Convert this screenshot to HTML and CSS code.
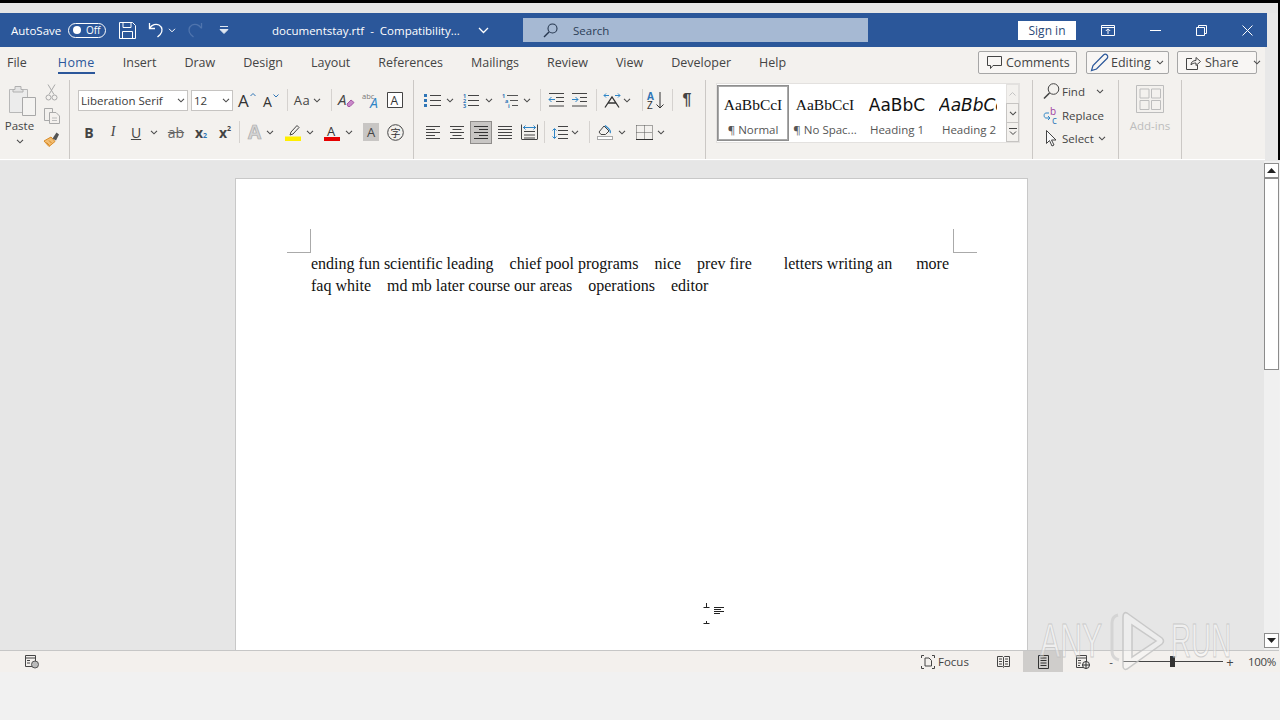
FILE: index.html
```html
<!DOCTYPE html>
<html lang="en">
<head>
<meta charset="utf-8">
<title>documentstay.rtf - Word</title>
<link rel="stylesheet" href="styles.css">
</head>
<body>
<svg class="defs" width="0" height="0" aria-hidden="true">
  <symbol id="chev" viewBox="0 0 8 5"><path d="M1 .8l3 3 3-3" fill="none" stroke="#4a4a4a" stroke-width="1.1"/></symbol>
  <symbol id="al" viewBox="0 0 16 13"><path d="M1 .5h14M1 3.5h9M1 6.5h14M1 9.5h9M1 12.5h14" stroke="#444" fill="none"/></symbol>
  <symbol id="ac" viewBox="0 0 16 13"><path d="M1 .5h14M3.5 3.5h9M1 6.5h14M3.500 9.500h9M1 12.500h14" stroke="#444" fill="none"/></symbol>
  <symbol id="ar" viewBox="0 0 16 13"><path d="M1 .5h14M6 3.500h9M1 6.500h14M6 9.500h9M1 12.500h14" stroke="#333" fill="none"/></symbol>
  <symbol id="aj" viewBox="0 0 16 13"><path d="M1 .5h14M1 3.500h14M1 6.500h14M1 9.500h14M1 12.500h14" stroke="#444" fill="none"/></symbol>
</svg>

<div class="screen">
  <div class="strip"></div>
  <div class="upper">
    <header class="titlebar">
      <span class="autosave">AutoSave</span>
      <span class="toggle"><i class="dot"></i><span class="off">Off</span></span>
      <svg class="ic-save" width="17" height="17" viewBox="0 0 17 17"><path d="M.5.5h13l3 3v13H.5z M4 .5v5h8v-5 M3.500 16.500v-7h10v7" fill="none" stroke="#fff"/></svg>
      <svg class="ic-undo" width="16" height="16" viewBox="0 0 16 16"><path d="M1.500 1v5.500H7M1.800 6C4 2.500 8 1.500 11 3c3.500 2 4 6.500 1.200 9.500L9.500 15" fill="none" stroke="#fff" stroke-width="1.300"/></svg>
      <svg class="ic-uchev" width="8" height="5"><path d="M1 .8l3 3 3-3" fill="none" stroke="#fff"/></svg>
      <svg class="ic-redo" width="16" height="16" viewBox="0 0 16 16"><path d="M14.500 1v5.500M14 6C12 2.500 8 1.500 5 3c-3.500 2-4 6.500-1.200 9.500L6.500 15" fill="none" stroke="#4f74ad" stroke-width="1.300"/></svg>
      <svg class="ic-qat" width="10" height="8" viewBox="0 0 10 8"><path d="M1 .5h8M1 3.500l4 4 4-4z" fill="#dfe7f2" stroke="#dfe7f2"/></svg>
      <span class="docname">documentstay.rtf&nbsp; - &nbsp;Compatibility...</span>
      <svg class="ic-dchev" width="11" height="7" viewBox="0 0 11 7"><path d="M1 1l4.500 4.500L10 1" fill="none" stroke="#fff" stroke-width="1.300"/></svg>
      <div class="search">
        <svg width="15" height="15" viewBox="0 0 15 15"><circle cx="9.500" cy="5.500" r="4.500" fill="none" stroke="#26374f" stroke-width="1.100"/><path d="M6 9l-5 5" stroke="#26374f" stroke-width="1.400"/></svg>
        <span>Search</span>
      </div>
      <div class="signin">Sign in</div>
      <svg class="ic-disp" width="14" height="11" viewBox="0 0 14 11"><path d="M.5.5h13v10H.5zM.5 2.500h13" fill="none" stroke="#fff"/><path d="M7 9V4M4.800 6L7 3.800 9.200 6" fill="none" stroke="#fff"/></svg>
      <svg class="ic-min" width="11" height="1" viewBox="0 0 11 1"><path d="M0 .5h11" stroke="#fff"/></svg>
      <svg class="ic-rest" width="11" height="11" viewBox="0 0 11 11"><path d="M.5 2.500h8v8h-8zM2.500 2.500v-2h8v8h-2" fill="none" stroke="#fff"/></svg>
      <svg class="ic-close" width="11" height="11" viewBox="0 0 11 11"><path d="M.5.5l10 10M10.500.5l-10 10" stroke="#fff"/></svg>
    </header>

    <nav class="tabs">
      <span class="tab tab-file">File</span>
      <span class="tab active">Home</span>
      <span class="tab">Insert</span>
      <span class="tab">Draw</span>
      <span class="tab">Design</span>
      <span class="tab">Layout</span>
      <span class="tab">References</span>
      <span class="tab">Mailings</span>
      <span class="tab">Review</span>
      <span class="tab">View</span>
      <span class="tab">Developer</span>
      <span class="tab">Help</span>
      <div class="actions">
        <span class="action act-comments"><svg width="15" height="14" viewBox="0 0 15 14"><path d="M.5.500h14v9H6L3.500 12.500v-3h-3z" fill="none" stroke="#444"/></svg>Comments</span>
        <span class="action act-editing"><svg width="19" height="19" viewBox="0 0 19 19"><path d="M1.500 17.500l1.500-5L13.500 2c1-1 2.500-1 3.500 0s1 2.500 0 3.500L6.500 16z" fill="none" stroke="#2b579a" stroke-width="1.200"/></svg>Editing<svg class="mini" width="8" height="5"><use href="#chev"/></svg></span>
        <span class="action act-share"><svg width="15" height="14" viewBox="0 0 15 14"><path d="M6 2.500H.5v11h11V9M5 9c0-3 2-4.500 5-4.500V1.500l4.500 4-4.500 4V7C8 7 6 7.500 5 9z" fill="none" stroke="#444"/></svg>Share<svg class="mini m-share" width="8" height="5"><use href="#chev"/></svg></span>
      </div>
    </nav>

    <section class="ribbon">
      <div class="group g-clip">
        <div class="paste">
          <svg width="28" height="31" viewBox="0 0 28 31"><path d="M.5 4.500h18v23H.5z" fill="#ececec" stroke="#b8b8b8"/><path d="M6 4.500V1.500h6v3h2v2.500H4V4.500z" fill="#e4e4e4" stroke="#b0b0b0"/><path d="M13.500 12.500h13v18h-13z" fill="#f4f3f1" stroke="#a8a8a8"/></svg>
          <span class="paste-label">Paste</span>
          <svg class="paste-chev" width="8" height="5"><use href="#chev"/></svg>
        </div>
        <div class="clip-small">
          <svg width="11" height="17" viewBox="0 0 11 17"><path d="M2 .5l6 10M9 .5l-6 10" stroke="#a9a9a9" fill="none"/><circle cx="2.500" cy="13.500" r="2.500" fill="none" stroke="#a9a9a9"/><circle cx="8.500" cy="13.500" r="2.500" fill="none" stroke="#a9a9a9"/></svg>
          <svg width="16" height="16" viewBox="0 0 16 16"><path d="M.5.500h8l0 12H.5z" fill="none" stroke="#a9a9a9"/><path d="M5.500 4.500h6.500l3.500 3.500v7.500h-10z" fill="#f4f1ee" stroke="#a9a9a9"/><path d="M8 10h5M8 12.500h5" stroke="#bbb"/></svg>
          <svg width="17" height="16" viewBox="0 0 17 16"><path d="M8 6L1 10l5 5.500 6-5z" fill="#f2bd72" stroke="#d98a24"/><path d="M3.500 11.500l3 3M6 9.500l2.500 2.500" stroke="#d98a24"/><path d="M9.500 7.500l4-6 2.500 2-3 6z" fill="#555"/></svg>
        </div>
      </div>

      <div class="group g-font">
        <div class="row">
          <span class="combo c-font">Liberation Serif<svg width="8" height="5"><use href="#chev"/></svg></span>
          <i class="w3"></i>
          <span class="combo c-size">12<svg width="8" height="5"><use href="#chev"/></svg></span>
          <i class="w2"></i>
          <span class="t w24"><svg width="18" height="17" viewBox="0 0 18 17"><text x="0" y="15" class="sv" font-size="17" fill="#333">A</text><path d="M12.500 4L15 1.500 17.500 4" fill="none" stroke="#2e75b6"/></svg></span>
          <span class="t w24"><svg width="16" height="15" viewBox="0 0 16 15"><text x="0" y="14" class="sv" font-size="14" fill="#333">A</text><path d="M10.500 1.500L13 4l2.500-2.500" fill="none" stroke="#2e75b6"/></svg></span>
          <i class="w4"></i><i class="sep"></i><i class="w4"></i>
          <span class="t w20 glyph">Aa</span>
          <span class="t w10"><svg width="8" height="5"><use href="#chev"/></svg></span>
          <i class="w9"></i><i class="sep"></i><i class="w2"></i>
          <span class="t w24"><svg width="17" height="17" viewBox="0 0 17 17"><text x="0" y="13" class="sv it" font-size="15" fill="#444">A</text><path d="M9 12l4-4 3 2.500-4 4h-2z" fill="#c889c8" stroke="#a556a5"/></svg></span>
          <span class="t w25"><svg width="18" height="17" viewBox="0 0 18 17"><text x="0" y="7" class="sv" font-size="7.500" fill="#777">abc</text><text x="8" y="16" class="sv it" font-size="14" fill="#2e85c6">A</text></svg></span>
          <span class="t w24"><svg width="16" height="16" viewBox="0 0 16 16"><path d="M.5.500h15v15H.5z" fill="#fff" stroke="#444"/><text x="3.500" y="12.500" class="sv" font-size="12" fill="#333">A</text></svg></span>
        </div>
        <div class="row">
          <span class="t w22 fmt b">B</span>
          <span class="t w26 fmt serif-i">I</span>
          <span class="t w20 fmt u">U</span>
          <span class="t w16"><svg width="8" height="5"><use href="#chev"/></svg></span>
          <span class="t w28 fmt strike">ab</span>
          <span class="t w22 fmt b sub">x<small>2</small></span>
          <span class="t w26 fmt b sup">x<small>2</small></span>
          <i class="w1"></i><i class="sep"></i><i class="w5"></i>
          <span class="t w22"><svg width="17" height="16" viewBox="0 0 17 16"><text x="0" y="15" class="sv" font-size="19" font-weight="bold" fill="#d4d4d4" stroke="#a9a9a9" stroke-width=".7">A</text></svg></span>
          <span class="t w6"><svg width="8" height="5" class="faint"><use href="#chev"/></svg></span>
          <i class="w6"></i>
          <span class="t w28"><svg width="17" height="17" viewBox="0 0 17 17"><path d="M5 11l1-3 6-6.500 2 2L8 10z" fill="none" stroke="#444"/><rect y="12.500" width="16" height="4.500" fill="#ffee00"/></svg></span>
          <span class="t w6"><svg width="8" height="5"><use href="#chev"/></svg></span>
          <i class="w5"></i>
          <span class="t w28"><svg width="16" height="17" viewBox="0 0 16 17"><text x="3" y="12" class="sv" font-size="13" fill="#333">A</text><rect y="13" width="16" height="4" fill="#e60000"/></svg></span>
          <span class="t w6"><svg width="8" height="5"><use href="#chev"/></svg></span>
          <i class="w7"></i>
          <span class="t w24"><span class="shaded">A</span></span>
          <span class="t w24"><svg width="17" height="17" viewBox="0 0 17 17"><circle cx="8.500" cy="8.500" r="7.800" fill="none" stroke="#444"/><text x="3.500" y="13" class="cjk" font-size="10" fill="#333">字</text></svg></span>
        </div>
      </div>

      <div class="group g-para">
        <div class="row">
          <i class="w1"></i>
          <span class="t w20"><svg width="17" height="15" viewBox="0 0 17 15"><path d="M0 1h3v3H0zM0 6h3v3H0zM0 11h3v3H0z" fill="#2e75b6"/><path d="M6 2.500h11M6 7.500h11M6 12.500h11" stroke="#444"/></svg></span>
          <span class="t w16"><svg width="8" height="5"><use href="#chev"/></svg></span>
          <span class="t w26"><svg width="16" height="15" viewBox="0 0 16 15"><text x="0" y="5" class="tiny">1</text><text x="0" y="10" class="tiny">2</text><text x="0" y="15" class="tiny">3</text><path d="M5 2.500h11M5 7.500h11M5 12.500h11" stroke="#444"/></svg></span>
          <span class="t w10"><svg width="8" height="5"><use href="#chev"/></svg></span>
          <i class="w4"></i>
          <span class="t w24"><svg width="16" height="15" viewBox="0 0 16 15"><text x="0" y="5" class="tiny">1</text><text x="3" y="10" class="tiny">a</text><text x="6" y="15" class="tiny">i</text><path d="M5 2.500h11M8 7.500h8M10 12.500h6" stroke="#555"/></svg></span>
          <span class="t w10"><svg width="8" height="5"><use href="#chev"/></svg></span>
          <i class="w8"></i><i class="sep"></i><i class="w3"></i>
          <span class="t w24"><svg width="16" height="14" viewBox="0 0 16 14"><path d="M1 .5h15M8 4.500h8M8 8.500h8M1 13h15" stroke="#444"/><path d="M7 6.500H1M3.500 4L1 6.500 3.500 9" fill="none" stroke="#2e85c6"/></svg></span>
          <span class="t w24"><svg width="16" height="14" viewBox="0 0 16 14"><path d="M0 .5h15M8 4.500h7M8 8.500h7M0 13h15" stroke="#444"/><path d="M0 6.500h6M3.500 4L6 6.500 3.500 9" fill="none" stroke="#2e85c6"/></svg></span>
          <i class="w4"></i><i class="sep"></i><i class="w3"></i>
          <span class="t w24"><svg width="18" height="16" viewBox="0 0 18 16"><path d="M2 15.500L9 5l7 10.500M5 11h8" fill="none" stroke="#333" stroke-width="1.300"/><path d="M1 3.500h5M3 1.500l-2 2 2 2M12 3.500h5M15 1.500l2 2-2 2" fill="none" stroke="#2e85c6"/></svg></span>
          <span class="t w6"><svg width="8" height="5"><use href="#chev"/></svg></span>
          <i class="w12"></i><i class="sep"></i><i class="w1"></i>
          <span class="t w24"><svg width="18" height="18" viewBox="0 0 18 18"><text x="0" y="8.500" class="sv" font-size="10" font-weight="bold" fill="#2e75b6">A</text><text x="0" y="17.500" class="sv" font-size="10" fill="#333">Z</text><path d="M13 1v16M9.500 13.500L13 17l3.500-3.500" fill="none" stroke="#333"/></svg></span>
          <i class="w4"></i><i class="sep"></i><i class="w2"></i>
          <span class="t w24 pil">¶</span>
        </div>
        <div class="row">
          <span class="t w24"><svg width="16" height="13"><use href="#al"/></svg></span>
          <span class="t w24"><svg width="16" height="13"><use href="#ac"/></svg></span>
          <span class="t w24"><span class="selected"><svg width="16" height="13"><use href="#ar"/></svg></span></span>
          <span class="t w24"><svg width="16" height="13"><use href="#aj"/></svg></span>
          <span class="t w24"><svg width="17" height="16" viewBox="0 0 17 16"><path d="M.5.500v15M16.500.500v15M3 7.500h11M3 11h11M3 14h11M1 15.500h15" stroke="#444" fill="none"/><path d="M2 3.500h13M4.500 1.500l-2 2 2 2M12.500 1.500l2 2-2 2" fill="none" stroke="#2e85c6"/></svg></span>
          <i class="w3"></i><i class="sep"></i><i class="w5"></i>
          <span class="t w20"><svg width="16" height="15" viewBox="0 0 16 15"><path d="M2.500 4v9M.5 5.500l2-2 2 2M.5 11.500l2 2 2-2" fill="none" stroke="#2e85c6"/><path d="M6 1.500h10M6 5.500h10M6 9.500h10M6 13.500h10" stroke="#444"/></svg></span>
          <span class="t w10"><svg width="8" height="5"><use href="#chev"/></svg></span>
          <i class="w9"></i><i class="sep"></i><i class="w5"></i>
          <span class="t w20"><svg width="16" height="16" viewBox="0 0 16 16"><path d="M2 8l5-6 5 5-3.500 3.500H4z" fill="none" stroke="#444"/><path d="M8 1.500c2 1.500 4 3 5 5 .5 1 .5 2 0 2.500" fill="none" stroke="#2e85c6" stroke-width="1.300"/><rect x=".5" y="12.500" width="15" height="3" fill="#fff" stroke="#a9a9a9"/></svg></span>
          <span class="t w14"><svg width="8" height="5"><use href="#chev"/></svg></span>
          <i class="w5"></i>
          <span class="t w20"><svg width="17" height="15" viewBox="0 0 17 15"><path d="M.5.500h16M.5.500v14M16.500.500v14M.5 7.500h16M8.500.500v14" stroke="#555" stroke-dasharray="1 1" fill="none"/><path d="M0 14.500h17" stroke="#333"/></svg></span>
          <span class="t w14"><svg width="8" height="5"><use href="#chev"/></svg></span>
        </div>
      </div>

      <div class="group g-styles">
        <div class="gallery">
          <div class="style current"><span class="pv pv-serif">AaBbCcI</span><span class="lb">¶ Normal</span></div>
          <div class="style"><span class="pv pv-serif">AaBbCcI</span><span class="lb">¶ No Spac...</span></div>
          <div class="style"><span class="pv pv-h1">AaBbC</span><span class="lb">Heading 1</span></div>
          <div class="style"><span class="pv pv-h2">AaBbCc</span><span class="lb">Heading 2</span></div>
          <div class="scroller">
            <span class="sb sb-up"><svg width="7" height="4" viewBox="0 0 7 4"><path d="M.5 3.500l3-3 3 3" fill="none" stroke="#c4c4c4"/></svg></span>
            <span class="sb"><svg width="8" height="5"><use href="#chev"/></svg></span>
            <span class="sb"><svg width="8" height="8" viewBox="0 0 8 8"><path d="M0 .5h8" stroke="#444"/><path d="M1 3.500l3 3 3-3" fill="none" stroke="#444"/></svg></span>
          </div>
        </div>
      </div>

      <div class="group g-edit">
        <div class="edit-row"><svg width="17" height="17" viewBox="0 0 17 17"><circle cx="10.500" cy="6" r="5.300" fill="none" stroke="#444"/><path d="M6.500 10L1 15.500" stroke="#444" stroke-width="1.600"/></svg><span>Find</span><svg class="m-find" width="8" height="5"><use href="#chev"/></svg></div>
        <div class="edit-row"><svg width="17" height="17" viewBox="0 0 17 17"><text x="7" y="8" class="sv" font-size="10" fill="#a03da0">b</text><text x="9" y="16.500" class="sv" font-size="10" fill="#2e75b6">c</text><path d="M6 6H3C.5 6 .5 11 3 11h4M5 9l2 2-2 2" fill="none" stroke="#2e85c6"/></svg><span>Replace</span></div>
        <div class="edit-row"><svg width="17" height="17" viewBox="0 0 17 17"><path d="M3.500 .5v13l3-3 2.500 5.500 2-1-2.500-5H13z" fill="#f8f8f8" stroke="#444"/></svg><span>Select</span><svg class="m-sel" width="8" height="5"><use href="#chev"/></svg></div>
      </div>

      <div class="group g-addins">
        <svg width="28" height="28" viewBox="0 0 28 28"><path d="M.5.500h27v27H.5z" fill="none" stroke="#bdbdbd"/><path d="M4 4h9v9H4zM15.500 4h9v9h-9zM4 15.500h9v9H4zM15.500 15.500h9v9h-9z" fill="none" stroke="#bdbdbd"/></svg>
        <span>Add-ins</span>
      </div>
    </section>
  </div>

  <main class="doc">
    <div class="canvas">
      <article class="page">
        <i class="crop crop-l"></i>
        <i class="crop crop-r"></i>
        <p class="line">ending fun scientific leading    chief pool programs    nice    prev fire        letters writing an      more</p>
        <p class="line l2">faq white    md mb later course our areas    operations    editor</p>
        <svg class="cursor" width="22" height="22" viewBox="0 0 22 22"><path d="M.5 4.500h6M3.500 0v4.500M.5 20.500h6M3.500 18v2.500" stroke="#222" fill="none"/><path d="M11 4.500h10M11 6.500h7M11 8.500h10M11 10.500h6" stroke="#222"/></svg>
      </article>
    </div>
    <aside class="vscroll">
      <span class="vbtn"><svg width="9" height="5" viewBox="0 0 9 5"><path d="M4.500 0L9 5H0z" fill="#222"/></svg></span>
      <span class="vthumb"></span>
      <span class="vfill"></span>
      <span class="vbtn vdown"><svg width="9" height="5" viewBox="0 0 9 5"><path d="M4.500 5L9 0H0z" fill="#222"/></svg></span>
    </aside>
  </main>

  <footer class="status">
    <svg class="st-macro" width="14" height="14" viewBox="0 0 14 14"><path d="M.5.500h10v11H.5zM.5 3h10M2 5.500h3M2 8h3" fill="none" stroke="#444"/><circle cx="10" cy="9.500" r="3.500" fill="#bbb" stroke="#555"/></svg>
    <span class="st-focus"><svg width="14" height="14" viewBox="0 0 14 14"><path d="M.5 3V.5H3M11 .5h2.500V3M.5 11v2.500H3M13.500 11v2.500H11" fill="none" stroke="#444"/><path d="M4 3h4l2.500 2.500v5.500H4z" fill="none" stroke="#444"/></svg>Focus</span>
    <span class="st-view st-read"><svg width="13" height="13" viewBox="0 0 13 13"><path d="M.5 1.500h5l1 1 1-1h5v10h-5l-1 1-1-1h-5zM6.500 2.500v9M2 4h3M2 6.500h3M2 9h3M8 4h3M8 6.500h3M8 9h3" fill="none" stroke="#444"/></svg></span>
    <span class="st-view st-print"><svg width="11" height="14" viewBox="0 0 11 14"><path d="M.5.500h10v13H.5zM2.500 3h6M2.500 5.500h6M2.500 8h6M2.500 10.500h6" fill="none" stroke="#333"/></svg></span>
    <span class="st-view st-web"><svg width="14" height="14" viewBox="0 0 14 14"><path d="M.5.500h10v12H.5zM.5 3h10M2 5.500h3M2 8h3M2 10.500h2" fill="none" stroke="#444"/><circle cx="10" cy="10" r="3.500" fill="#f3f1ee" stroke="#333"/><path d="M6.500 10h7M10 6.500v7" stroke="#333"/></svg></span>
    <div class="zoom">
      <span class="zm">-</span>
      <span class="track"><i class="thumb"></i></span>
      <span class="zp">+</span>
    </div>
    <span class="pct">100%</span>
  </footer>

  <div class="mark" aria-hidden="true">
    <span class="mark-t mark-any">ANY</span>
    <svg width="54" height="62" viewBox="0 0 54 62"><path d="M8 5c-4 1-6 4-6 8v28c0 5 3 8 7 9" fill="none" stroke="#cfcfcf" stroke-width="3" opacity=".8"/><path d="M17 3l35 25c2 2 2 4 0 6L17 59c-2 1-4 0-4-3V7c0-4 2-5 4-4z M22 15v32l24-16z" fill="rgba(255,255,255,.35)" stroke="#c4c4c4" stroke-width="1.500" opacity=".85"/></svg>
    <span class="mark-t mark-run">RUN</span>
  </div>
</div>
</body>
</html>
```

FILE: styles.css
```css
* { box-sizing: border-box; }
html, body { margin: 0; padding: 0; }
body { width: 1280px; height: 720px; overflow: hidden; font-family: "Open Sans", "Noto Sans", sans-serif; color: #444; }
.defs { position: absolute; }
i { display: block; flex: none; font-style: normal; }
svg { display: block; flex: none; overflow: visible; }
.sv { font-family: "Open Sans", sans-serif; }
.it { font-style: italic; }
.cjk { font-family: "Noto Sans CJK SC", sans-serif; }
.tiny { font-family: "Open Sans", sans-serif; font-size: 5.500px; fill: #2e75b6; font-weight: 700; }

.screen { position: relative; width: 1280px; height: 720px; background: #f1f1f1; display: flex; flex-direction: column; overflow: hidden; }
.screen::after { content: ""; position: absolute; left: 1278px; top: 0; width: 2px; height: 160px; background: #000; }
.strip { height: 13px; flex: none; border-top: 3px solid #000; background: #e6e6e6; }
.upper { flex: none; height: 148px; background: #e8e8e8; }

/* title bar */
.titlebar { width: 1267px; height: 34px; background: #2b579a; color: #fff; display: flex; align-items: center; padding-left: 11px; font-size: 12px; }
.autosave { width: 57px; font-size: 11.500px; }
.toggle { width: 38px; height: 15px; border: 1px solid #fff; border-radius: 8px; display: flex; align-items: center; padding-left: 4px; }
.dot { width: 8px; height: 8px; background: #fff; border-radius: 50%; }
.off { font-size: 10px; margin-left: 5px; line-height: 1; }
.ic-save { margin-left: 13px; }
.ic-undo { margin-left: 12px; }
.ic-uchev { margin-left: 4px; }
.ic-redo { margin-left: 11px; }
.ic-qat { margin-left: 16px; }
.docname { margin-left: 43px; width: 199px; white-space: nowrap; font-size: 11.500px; }
.ic-dchev { margin-left: 7px; }
.search { margin-left: 34px; width: 345px; height: 24px; background: #a6b9d3; color: #2c3e57; display: flex; align-items: center; padding-left: 20px; font-size: 11.500px; }
.search span { margin-left: 15px; }
.signin { margin-left: 150px; width: 58px; height: 19px; background: #fff; color: #2b4a78; font-size: 12px; display: flex; align-items: center; justify-content: center; margin-top: 1px; }
.ic-disp { margin-left: 25px; }
.ic-min { margin-left: 35px; }
.ic-rest { margin-left: 35px; }
.ic-close { margin-left: 35px; }

/* tabs */
.tabs { width: 1265px; height: 33px; background: #f3f1ee; display: flex; align-items: center; padding: 0 0 2px 7px; font-size: 12.500px; color: #444; }
.tab { margin-right: 28px; position: relative; white-space: nowrap; }
.tab-file { margin-right: 31px; }
.tab.active { color: #2b579a; letter-spacing: .4px; }
.tab.active::after { content: ""; position: absolute; left: 0; right: 0; bottom: -3px; height: 2px; background: #2b579a; }
.actions { margin-left: auto; margin-right: 8px; display: flex; gap: 9px; }
.action { height: 23px; background: #f8f6f4; border: 1px solid #a6a6a6; border-radius: 2px; display: flex; align-items: center; font-size: 12.500px; color: #444; white-space: nowrap; }
.act-comments { width: 99px; padding-left: 8px; gap: 4px; }
.act-editing { width: 83px; padding-left: 3px; gap: 2px; }
.act-share { width: 80px; padding-left: 8px; gap: 4px; margin-left: -1px; }
.mini { margin-left: 3px; }
.m-share { margin-left: 10px; }

/* ribbon */
.ribbon { width: 1265px; height: 80px; background: #f3f1ee; display: flex; border-bottom: 1px solid #fff; }
.group { flex: none; border-right: 1px solid #cbc8c5; height: 79px; }
.g-clip { width: 70px; display: flex; padding-top: 5px; }
.paste { width: 38px; display: flex; flex-direction: column; align-items: center; padding-left: 1px; }
.paste svg:first-child { margin-left: 6px; }
.paste-label { font-size: 11.500px; line-height: 16px; margin-top: 2px; }
.paste-chev { margin-top: 5px; }
.clip-small { width: 26px; display: flex; flex-direction: column; align-items: center; gap: 7px; padding-left: 1px; margin-top: -1px; }
.g-font { width: 344px; padding: 9px 0 0 8px; display: flex; flex-direction: column; gap: 10px; }
.g-para { width: 292px; padding: 9px 0 0 7px; display: flex; flex-direction: column; gap: 10px; }
.row { height: 22px; display: flex; align-items: center; }
.t { flex: none; height: 22px; display: flex; align-items: center; justify-content: center; }
.w1 { width: 1px; } .w2 { width: 2px; } .w3 { width: 3px; } .w4 { width: 4px; } .w5 { width: 5px; } .w6 { width: 6px; } .w7 { width: 7px; } .w8 { width: 8px; } .w9 { width: 9px; }
.w10 { width: 10px; } .w12 { width: 12px; } .w14 { width: 14px; } .w16 { width: 16px; } .w20 { width: 20px; } .w22 { width: 22px; } .w24 { width: 24px; } .w25 { width: 25px; } .w26 { width: 26px; } .w28 { width: 28px; }
.sep { width: 1px; height: 22px; background: #d5d2cf; }
.combo { height: 21px; background: #fff; border: 1px solid #c6c4c2; display: flex; align-items: center; justify-content: space-between; padding: 0 2px 0 2px; font-size: 11.500px; color: #3a3a3a; white-space: nowrap; }
.c-font { width: 110px; }
.c-size { width: 42px; }
.glyph { font-size: 13px; letter-spacing: .5px; }
.fmt { font-size: 14px; color: #444; }
.b { font-weight: 700; }
.serif-i { font-family: "Liberation Serif", serif; font-style: italic; }
.u { text-decoration: underline; }
.strike { text-decoration: line-through; color: #666; }
.sub small, .sup small { font-size: 7px; color: #2e75b6; }
.sub small { align-self: flex-end; margin-bottom: 3px; }
.sup small { align-self: flex-start; margin-top: 3px; color: #444; }
.shaded { width: 16px; height: 18px; background: #c8c6c4; font-size: 13px; display: flex; align-items: center; justify-content: center; color: #444; }
.pil { font-size: 16px; font-weight: 700; color: #444; font-family: "Liberation Sans", sans-serif; }
.selected { width: 22px; height: 23px; background: #c8c6c4; border: 1px solid #8f8d8b; display: flex; align-items: center; justify-content: center; flex: none; }

/* styles */
.g-styles { width: 327px; padding: 3px 0 0 10px; }
.gallery { width: 304px; height: 60px; background: #fff; border: 1px solid #e3e1df; display: flex; }
.style { width: 72px; height: 58px; flex: none; display: flex; flex-direction: column; align-items: center; padding-top: 8px; overflow: hidden; }
.style.current { height: 56px; margin-top: 1px; border: 2px solid #a9a9a9; outline: 1px solid #8f8f8f; outline-offset: -1px; padding-top: 5px; }
.pv { height: 26px; line-height: 26px; color: #111; white-space: nowrap; flex: none; }
.pv-serif { font-family: "Liberation Serif", serif; font-size: 15.500px; }
.pv-h1 { font-family: "DejaVu Sans", sans-serif; font-size: 17px; }
.pv-h2 { font-family: "DejaVu Sans", sans-serif; font-size: 17px; font-style: italic; align-self: flex-start; margin-left: 6px; width: 58px; overflow: hidden; }
.lb { font-size: 11.500px; color: #555; line-height: 16px; margin-top: 4px; white-space: nowrap; }
.scroller { width: 14px; margin-left: 1px; display: flex; flex-direction: column; }
.sb { height: 20px; display: flex; align-items: center; justify-content: center; background: #f3f1ee; border: 1px solid #c6c4c2; margin-top: -1px; }
.sb-up { border-color: #e3e1df; margin-top: 0; }

/* edit */
.g-edit { width: 86px; padding: 0 0 0 10px; font-size: 11.500px; display: flex; flex-direction: column; gap: .5px; }
.edit-row { height: 23px; display: flex; align-items: center; gap: 2px; white-space: nowrap; color: #444; }
.m-find { margin-left: 9px; }
.m-sel { margin-left: 2px; }
.g-addins { width: 63px; display: flex; flex-direction: column; align-items: center; padding-top: 5px; color: #bdbdbd; font-size: 11.500px; }
.g-addins span { margin-top: 5px; }

/* document */
.doc { flex: none; height: 490px; display: flex; width: 1280px; }
.canvas { width: 1264px; background: #e6e6e6; padding: 17px 0 0 235px; overflow: hidden; border-bottom: 1px solid #c6c6c6; }
.page { position: relative; width: 793px; height: 700px; background: #fff; border: 1px solid #c8c8c8; padding: 74px 0 0 75px; font-family: "Liberation Serif", serif; font-size: 16px; color: #111; }
.line { margin: 0; height: 22px; line-height: 22px; white-space: pre; }
.crop { position: absolute; width: 24px; height: 24px; top: 50px; }
.crop-l { left: 51px; border-right: 1px solid #aaa; border-bottom: 1px solid #aaa; }
.crop-r { left: 717px; border-left: 1px solid #aaa; border-bottom: 1px solid #aaa; }
.cursor { position: absolute; left: 467px; top: 424px; }
.vscroll { width: 15px; flex: none; background: #f0f0f0; display: flex; flex-direction: column; padding-top: 2px; border-bottom: 1px solid #c6c6c6; }
.vbtn { height: 15px; flex: none; background: #fff; border: 1px solid #8c8c8c; display: flex; align-items: center; justify-content: center; }
.vthumb { height: 193px; flex: none; background: #fff; border: 1px solid #8c8c8c; border-top-width: 2px; margin-top: -1px; }
.vfill { flex: 1; }
.vdown { margin-bottom: 2px; }

/* status */
.status { flex: none; height: 21px; background: #f3f0ed; display: flex; align-items: center; padding-left: 25px; font-size: 11.500px; color: #444; }
.st-focus { margin-left: 882px; display: flex; align-items: center; gap: 3px; width: 54px; white-space: nowrap; }
.st-view { width: 40px; height: 21px; display: flex; align-items: center; justify-content: center; flex: none; }
.st-read { margin-left: 8px; }
.st-print { background: #cfcdcb; }
.zoom { margin-left: 2px; display: flex; align-items: center; flex: none; }
.zm { width: 12px; text-align: center; }
.track { position: relative; width: 100px; height: 1px; background: #444; margin: 0 1px 0 6px; }
.thumb { position: absolute; left: 47px; top: -5px; width: 5px; height: 11px; background: #333; }
.zp { width: 12px; text-align: center; font-size: 13px; }
.pct { margin-left: 12px; font-size: 11.500px; letter-spacing: -.3px; }

/* watermark */
.mark { position: absolute; left: 1040px; top: 610px; height: 62px; display: flex; align-items: center; pointer-events: none; }
.mark-t { display: block; font-family: "Liberation Sans", sans-serif; font-size: 48px; line-height: 62px; color: rgba(255,255,255,.4); -webkit-text-stroke: 1px rgba(190,190,190,.75); transform-origin: left center; white-space: nowrap; }
.mark-any { transform: scaleX(.63); width: 70px; }
.mark-run { transform: scaleX(.58); margin-left: 7px; width: 60px; }
```
